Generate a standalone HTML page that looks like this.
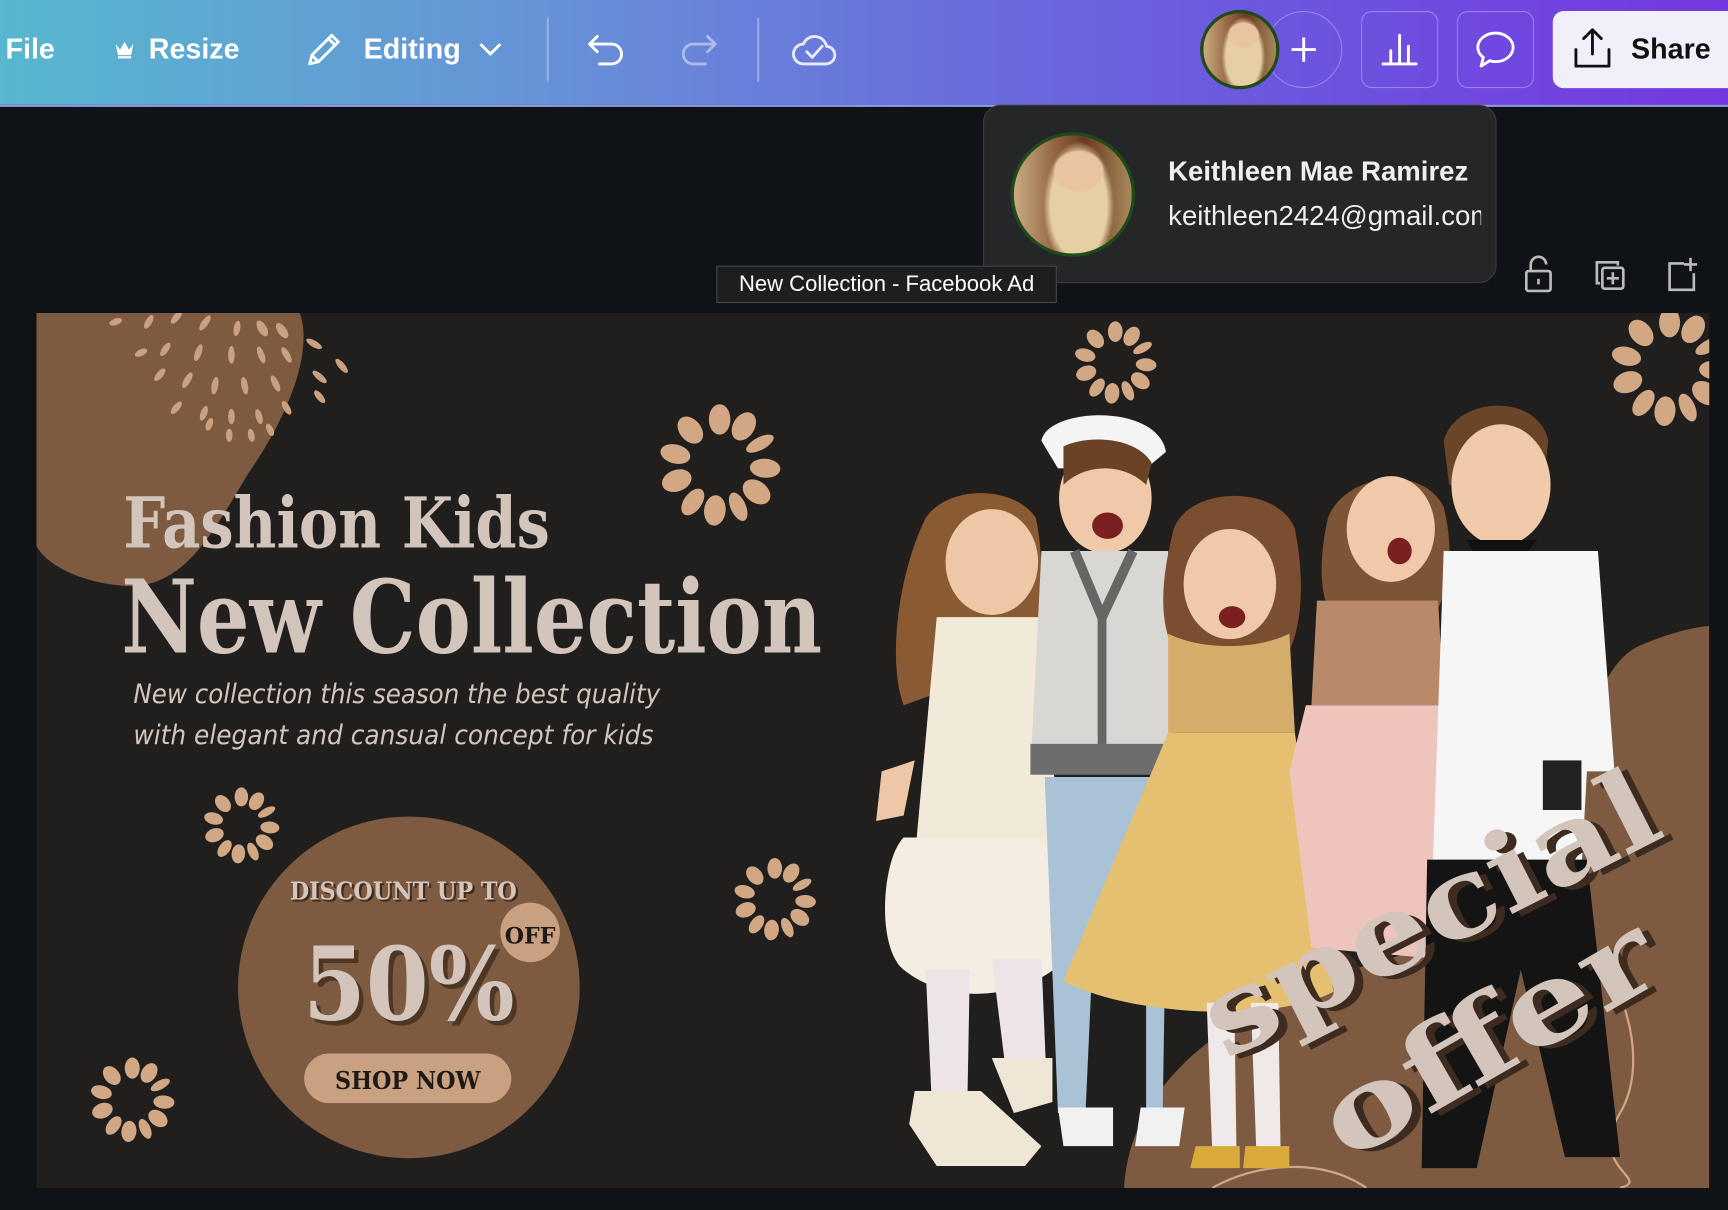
<!DOCTYPE html>
<html><head><meta charset="utf-8"><style>
html,body{margin:0;padding:0;background:#0f1217;width:1728px;height:1210px;overflow:hidden}
#w{position:absolute;left:0;top:0;width:1568px;height:1098px;transform:scale(1.10204);transform-origin:0 0;font-family:"Liberation Sans",sans-serif}
.hdr{position:absolute;left:0;top:0;width:1568px;height:95px;background:linear-gradient(90deg,#57b7ce 0%,#6694d6 30%,#6a6edd 55%,#6d55df 75%,#7438e0 100%);border-bottom:2px solid #8f9ae6}
.t{position:absolute;color:#fff;font-weight:bold;font-size:26px;top:29px}
.btn{position:absolute;top:10px;width:70px;height:70px;border:1.5px solid rgba(255,255,255,.3);border-radius:10px;box-sizing:border-box}
svg{position:absolute;overflow:visible}
.card{position:absolute;left:892px;top:95px;width:466px;height:162px;background:#252628;border:1.5px solid #3a3b3d;border-radius:16px;box-sizing:border-box}
.tip{position:absolute;left:650px;top:241px;width:309px;height:34px;background:#1d1e20;border:1px solid #45464a;box-sizing:border-box;color:#fff;font-size:20px;line-height:32px;text-align:center}
.av{border-radius:50%;box-sizing:border-box;border:3px solid #1f4a1a;background:radial-gradient(ellipse 22% 18% at 55% 30%,#e8c4a0 0 90%,transparent 100%),radial-gradient(ellipse 30% 55% at 55% 60%,#e6cfa4 0 80%,transparent 100%),linear-gradient(90deg,#c9ab80 0%,#8c5a3a 40%,#6a3a22 60%,#a98a5c 100%)}
</style></head><body><div id="w">
<div class="hdr">
<div class="t" style="left:5px">File</div>
<svg style="left:103px;top:36px" width="20" height="18" viewBox="0 0 20 18"><path d="M2 4l4 5 4-7 4 7 4-5-2 10H4z" fill="#fff"/><rect x="4" y="15" width="12" height="2" fill="#fff"/></svg>
<div class="t" style="left:135px">Resize</div>
<svg style="left:277px;top:28px" width="34" height="34" viewBox="0 0 34 34" fill="none" stroke="#fff" stroke-width="2.6" stroke-linejoin="round"><path d="M4 30l2-8L24 4l6 6-18 18z M21 7l6 6 M6 22l6 6"/></svg>
<div class="t" style="left:330px">Editing</div>
<svg style="left:434px;top:38px" width="22" height="14" viewBox="0 0 22 14" fill="none" stroke="#fff" stroke-width="2.6"><path d="M2 2l9 9 9-9"/></svg>
<div style="position:absolute;left:496px;top:16px;width:1.5px;height:58px;background:rgba(255,255,255,.3)"></div>
<svg style="left:532px;top:30px" width="36" height="30" viewBox="0 0 36 30" fill="none" stroke="#fff" stroke-width="2.6" stroke-linecap="round" stroke-linejoin="round"><path d="M10 3L3 10l7 7 M3 10h20a9 9 0 0 1 0 18H12"/></svg>
<svg style="left:616px;top:30px" width="36" height="30" viewBox="0 0 36 30" fill="none" stroke="rgba(255,255,255,.45)" stroke-width="2.6" stroke-linecap="round" stroke-linejoin="round"><path d="M26 3l7 7-7 7 M33 10H13a9 9 0 0 0 0 18h11"/></svg>
<div style="position:absolute;left:687px;top:16px;width:1.5px;height:58px;background:rgba(255,255,255,.3)"></div>
<svg style="left:719px;top:28px" width="40" height="34" viewBox="0 0 40 34" fill="none" stroke="rgba(255,255,255,.85)" stroke-width="2.6" stroke-linecap="round" stroke-linejoin="round"><path d="M10 30h20a8 8 0 0 0 1-16A11 11 0 0 0 10 12a9 9 0 0 0 0 18z M13 19l5 5 9-10"/></svg>
<div style="position:absolute;left:1148px;top:10px;width:70px;height:70px;border:1.5px solid rgba(255,255,255,.3);border-radius:50%;box-sizing:border-box"></div>
<svg style="left:1171px;top:33px" width="24" height="24" viewBox="0 0 24 24" stroke="#fff" stroke-width="2.6"><path d="M12 1v22M1 12h22"/></svg>
<div class="av" style="position:absolute;left:1089px;top:9px;width:72px;height:72px"></div>
<div class="btn" style="left:1235px"></div>
<svg style="left:1253px;top:28px" width="34" height="32" viewBox="0 0 34 32" fill="none" stroke="#fff" stroke-width="2.6" stroke-linecap="round"><path d="M2 30h30 M9 18v12 M17 4v26 M25 14v16"/></svg>
<div class="btn" style="left:1322px"></div>
<svg style="left:1339px;top:27px" width="36" height="36" viewBox="0 0 36 36" fill="none" stroke="#fff" stroke-width="2.6" stroke-linejoin="round"><path d="M18 3C9 3 2 9 2 16c0 4 2 7 5 9l-2 8 8-5c2 1 3 1 5 1 9 0 16-6 16-13S27 3 18 3z"/></svg>
<div style="position:absolute;left:1409px;top:10px;width:170px;height:70px;background:#f1eff9;border-radius:10px"></div>
<svg style="left:1427px;top:25px" width="36" height="38" viewBox="0 0 36 38" fill="none" stroke="#111" stroke-width="2.6" stroke-linecap="round" stroke-linejoin="round"><path d="M18 24V3 M10 10l8-8 8 8 M3 20v15h30V20"/></svg>
<div class="t" style="left:1480px;color:#111">Share</div>
</div>

<div class="card">
<div class="av" style="position:absolute;left:24px;top:24px;width:113px;height:113px"></div>
<div style="position:absolute;left:167px;top:46px;color:#eee;font-size:25px;font-weight:bold;white-space:nowrap">Keithleen Mae Ramirez</div>
<div style="position:absolute;left:167px;top:86px;width:284px;overflow:hidden;color:#eee;font-size:25px;white-space:nowrap">keithleen2424@gmail.com</div>
</div>
<div class="tip">New Collection - Facebook Ad</div>
<svg style="left:1383px;top:232px" width="26" height="34" viewBox="0 0 26 34" fill="none" stroke="#bbb" stroke-width="2.4"><path d="M6 14V8a7 7 0 0 1 14 0"/><rect x="2" y="14" width="22" height="18" rx="2"/><path d="M13 21v5"/></svg>
<svg style="left:1446px;top:235px" width="30" height="30" viewBox="0 0 30 30" fill="none" stroke="#bbb" stroke-width="2.4"><path d="M6 22H3V3h19v3"/><rect x="8" y="8" width="19" height="19" rx="2"/><path d="M17.5 12v11M12 17.5h11"/></svg>
<svg style="left:1512px;top:233px" width="30" height="32" viewBox="0 0 30 32" fill="none" stroke="#bbb" stroke-width="2.4"><path d="M16 6H3v24h22V15 M22 1v12M16 7h12"/></svg>

<svg style="left:0;top:0" width="1568" height="1098" viewBox="0 0 1568 1098">
<defs>
<clipPath id="cv"><rect x="33" y="284" width="1518" height="794"/></clipPath>
<g id="fl" fill="#d2a884">
<ellipse cx="0" cy="-36" rx="8.5" ry="12"/>
<ellipse cx="0" cy="-36" rx="8.5" ry="12" transform="rotate(32)"/>
<ellipse cx="0" cy="-36" rx="5" ry="12" transform="rotate(62)"/>
<ellipse cx="0" cy="-36" rx="7.5" ry="12" transform="rotate(94)"/>
<ellipse cx="0" cy="-36" rx="8.5" ry="12" transform="rotate(126)"/>
<ellipse cx="0" cy="-36" rx="6" ry="12" transform="rotate(156)"/>
<ellipse cx="0" cy="-36" rx="8.5" ry="12" transform="rotate(186)"/>
<ellipse cx="0" cy="-36" rx="7" ry="12" transform="rotate(216)"/>
<ellipse cx="0" cy="-36" rx="8.5" ry="12" transform="rotate(250)"/>
<ellipse cx="0" cy="-36" rx="7.5" ry="12" transform="rotate(284)"/>
<ellipse cx="0" cy="-36" rx="8.5" ry="12" transform="rotate(320)"/>
</g>
</defs>
<g clip-path="url(#cv)">
<rect x="33" y="284" width="1518" height="794" fill="#211f1e"/>
<path d="M33 284H272C285 320 260 380 225 430C195 480 170 530 120 532C70 530 40 510 33 495Z" fill="#7e5a40"/>
<g fill="#c9a080">
<ellipse cx="105" cy="292" rx="6" ry="3" transform="rotate(-20 105 292)"/><ellipse cx="135" cy="292" rx="3" ry="7" transform="rotate(30 135 292)"/><ellipse cx="160" cy="288" rx="3" ry="7" transform="rotate(40 160 288)"/>
<ellipse cx="186" cy="293" rx="3" ry="8" transform="rotate(35 186 293)"/><ellipse cx="215" cy="298" rx="3" ry="7" transform="rotate(10 215 298)"/><ellipse cx="238" cy="298" rx="4" ry="8" transform="rotate(-30 238 298)"/><ellipse cx="256" cy="300" rx="4" ry="8" transform="rotate(-35 256 300)"/>
<ellipse cx="128" cy="320" rx="6" ry="3" transform="rotate(-25 128 320)"/><ellipse cx="150" cy="317" rx="3" ry="7" transform="rotate(35 150 317)"/><ellipse cx="180" cy="320" rx="3" ry="8" transform="rotate(20 180 320)"/><ellipse cx="210" cy="322" rx="3" ry="8"/><ellipse cx="237" cy="322" rx="3" ry="8" transform="rotate(-20 237 322)"/><ellipse cx="260" cy="322" rx="3" ry="8" transform="rotate(-30 260 322)"/><ellipse cx="285" cy="312" rx="8" ry="3" transform="rotate(30 285 312)"/><ellipse cx="310" cy="332" rx="3" ry="8" transform="rotate(-40 310 332)"/>
<ellipse cx="145" cy="340" rx="3" ry="7" transform="rotate(40 145 340)"/><ellipse cx="170" cy="345" rx="3" ry="8" transform="rotate(30 170 345)"/><ellipse cx="195" cy="350" rx="3" ry="8" transform="rotate(10 195 350)"/><ellipse cx="222" cy="350" rx="3" ry="8" transform="rotate(-10 222 350)"/><ellipse cx="250" cy="348" rx="3" ry="8" transform="rotate(-25 250 348)"/><ellipse cx="290" cy="342" rx="8" ry="3" transform="rotate(40 290 342)"/>
<ellipse cx="160" cy="370" rx="3" ry="7" transform="rotate(40 160 370)"/><ellipse cx="185" cy="375" rx="3" ry="7" transform="rotate(20 185 375)"/><ellipse cx="210" cy="378" rx="3" ry="7"/><ellipse cx="235" cy="378" rx="3" ry="7" transform="rotate(-15 235 378)"/><ellipse cx="260" cy="370" rx="3" ry="7" transform="rotate(-30 260 370)"/><ellipse cx="290" cy="360" rx="3" ry="7" transform="rotate(-40 290 360)"/>
<ellipse cx="190" cy="385" rx="3" ry="6" transform="rotate(20 190 385)"/><ellipse cx="208" cy="395" rx="3" ry="6"/><ellipse cx="228" cy="395" rx="3" ry="6" transform="rotate(-10 228 395)"/><ellipse cx="245" cy="390" rx="3" ry="6" transform="rotate(-25 245 390)"/>
</g>
<use href="#fl" transform="translate(653 422) scale(1.15)"/>
<use href="#fl" transform="translate(1012 329) scale(0.78)"/>
<use href="#fl" transform="translate(219 749) scale(0.72)"/>
<use href="#fl" transform="translate(703 816) scale(0.78)"/>
<use href="#fl" transform="translate(120 998) scale(0.8)"/>
<use href="#fl" transform="translate(1515 333) scale(1.12)"/>
<path d="M1020 1078C1025 980 1120 900 1300 860C1430 830 1420 610 1490 585C1520 572 1545 568 1551 568V1078Z" fill="#7e5a40"/>
<path d="M1420 840C1470 870 1500 960 1470 1010C1440 1060 1500 1070 1470 1078" fill="none" stroke="#d2a884" stroke-width="2"/>
<path d="M1100 1078C1140 1055 1200 1050 1240 1078" fill="none" stroke="#d2a884" stroke-width="2"/>

<g>
<path d="M840 470C860 440 920 440 940 470C950 520 945 580 930 600L820 640C805 600 815 520 840 470Z" fill="#8a5a33"/>
<ellipse cx="900" cy="510" rx="42" ry="48" fill="#edc7a6"/>
<path d="M850 560H950L960 780H830Z" fill="#f1ead9"/>
<path d="M820 760C800 780 795 860 820 880C870 920 950 900 975 860C980 800 960 770 940 760Z" fill="#f3ede2"/>
<path d="M840 880H880L878 990H845Z M900 870H945L950 990L915 990Z" fill="#ece4e6"/>
<path d="M830 990H890L945 1040L930 1058H850L825 1020Z M900 960H955V1000L920 1010Z" fill="#efe6d6"/>
<path d="M800 700L830 690L820 740L795 745Z" fill="#edc7a6"/>
<path d="M945 400C950 370 1050 365 1058 410L1040 425H960Z" fill="#f4f4f4"/>
<ellipse cx="1003" cy="452" rx="42" ry="50" fill="#f0c9a8"/>
<path d="M965 405C985 395 1030 395 1045 420L1040 440C1020 420 985 420 965 440Z" fill="#6a4326"/>
<ellipse cx="1005" cy="477" rx="14" ry="12" fill="#7a2020"/>
<path d="M945 500H1060L1065 700H935Z" fill="#d9d7d4"/>
<path d="M975 500L1000 560L1028 500" fill="none" stroke="#666" stroke-width="9"/>
<rect x="996" y="560" width="8" height="140" fill="#666"/>
<rect x="935" y="675" width="130" height="28" fill="#6d6d6d"/>
<path d="M948 705H1060L1055 1010H1040V900H990L985 1010H960Z" fill="#a9c2d6"/>
<path d="M960 1005H1010L1010 1040H965Z M1035 1005H1075L1070 1040H1030Z" fill="#f1f1f1"/>
<path d="M1065 480C1080 440 1160 440 1175 480C1185 530 1180 570 1170 590H1065C1050 560 1055 520 1065 480Z" fill="#7a4e2e"/>
<ellipse cx="1116" cy="530" rx="42" ry="50" fill="#f0c8aa"/>
<ellipse cx="1118" cy="560" rx="12" ry="10" fill="#7a2020"/>
<path d="M1060 575C1090 590 1140 590 1170 575L1175 665H1060Z" fill="#d5ad6a"/>
<path d="M1060 665H1175L1210 900C1150 930 1020 920 965 890Z" fill="#e6c071"/>
<path d="M1095 910H1120L1122 1045H1100Z M1135 910H1160L1162 1045H1140Z" fill="#efe9ea"/>
<path d="M1085 1040H1125V1060H1080Z M1130 1040H1170V1060H1128Z" fill="#d9a93a"/>
<path d="M1205 470C1220 430 1290 420 1310 460C1320 500 1315 540 1300 560H1210C1195 540 1198 500 1205 470Z" fill="#7e5436"/>
<ellipse cx="1262" cy="480" rx="40" ry="48" fill="#f0c8aa"/>
<ellipse cx="1270" cy="500" rx="11" ry="12" fill="#7a2020"/>
<path d="M1195 545H1305L1310 640H1190Z" fill="#b88a6a"/>
<path d="M1185 640H1310L1305 870L1190 860L1170 700Z" fill="#efc4bc"/>
<path d="M1310 400C1320 360 1395 355 1405 400L1400 440H1315Z" fill="#6b4528"/>
<ellipse cx="1362" cy="440" rx="45" ry="55" fill="#f1caa9"/>
<path d="M1330 490H1395L1370 520H1350Z" fill="#111"/>
<path d="M1310 500H1450L1465 700H1440L1435 790H1300Z" fill="#f6f6f6"/>
<path d="M1295 780H1440L1470 1050H1420L1380 880L1340 1060H1290Z" fill="#141414"/>
<rect x="1400" y="690" width="35" height="45" fill="#222"/>
</g>

<g font-family="'DejaVu Serif',serif" font-weight="bold" fill="#d4c5bc">
<text x="112" y="497" font-size="64" textLength="387" lengthAdjust="spacingAndGlyphs">Fashion Kids</text>
<text x="110" y="592" font-size="92" textLength="636" lengthAdjust="spacingAndGlyphs">New Collection</text>
</g>
<g font-family="'DejaVu Sans','Liberation Sans',sans-serif" font-style="italic" font-weight="300" fill="#d4c5bc" font-size="24">
<text x="121" y="638" textLength="478" lengthAdjust="spacingAndGlyphs">New collection this season the best quality</text>
<text x="121" y="675" textLength="472" lengthAdjust="spacingAndGlyphs">with elegant and cansual concept for kids</text>
</g>
<circle cx="371" cy="896" r="155" fill="#7e5a40"/>
<g font-family="'DejaVu Serif',serif" font-weight="bold">
<text x="263" y="816" font-size="22" fill="#3a2a20" textLength="206" lengthAdjust="spacingAndGlyphs" transform="translate(2 2)">DISCOUNT UP TO</text>
<text x="263" y="816" font-size="22" fill="#d4c5bc" textLength="206" lengthAdjust="spacingAndGlyphs">DISCOUNT UP TO</text>
<text x="275" y="925" font-size="92" fill="#4e3625" textLength="192" lengthAdjust="spacingAndGlyphs" transform="translate(4 4)">50%</text>
<text x="275" y="925" font-size="92" fill="#d4c5bc" textLength="192" lengthAdjust="spacingAndGlyphs">50%</text>
<circle cx="481" cy="846" r="27" fill="#c9a080"/>
<text x="458" y="856" font-size="20" fill="#1e1a18" textLength="46" lengthAdjust="spacingAndGlyphs">OFF</text>
<rect x="276" y="956" width="188" height="45" rx="22.5" fill="#c9a080"/>
<text x="304" y="988" font-size="22" fill="#1e1a18" textLength="132" lengthAdjust="spacingAndGlyphs">SHOP NOW</text>
<g transform="rotate(-27 1112 962)" font-size="100">
<text x="1112" y="962" fill="#3d2b20" textLength="450" lengthAdjust="spacingAndGlyphs" transform="translate(6 6)">special</text>
<text x="1112" y="962" fill="#d4c5bc" textLength="450" lengthAdjust="spacingAndGlyphs">special</text>
</g>
<g transform="rotate(-30 1222 1055)" font-size="100">
<text x="1222" y="1055" fill="#3d2b20" textLength="335" lengthAdjust="spacingAndGlyphs" transform="translate(6 6)">offer</text>
<text x="1222" y="1055" fill="#d4c5bc" textLength="335" lengthAdjust="spacingAndGlyphs">offer</text>
</g>
</g>
</g>
</svg>
</div></body></html>
